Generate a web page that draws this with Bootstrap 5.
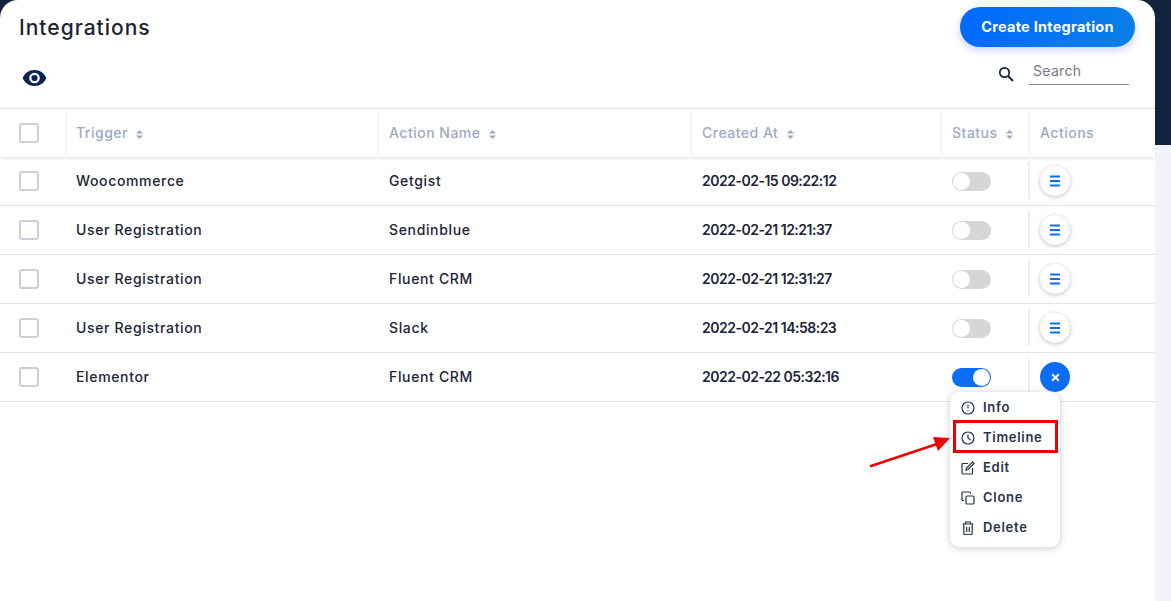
<!DOCTYPE html>
<html lang="en">
<head>
  <meta charset="UTF-8">
  <meta name="viewport" content="width=device-width, initial-scale=1.0">
  <title>Integrations</title>
  <link href="https://cdn.jsdelivr.net/npm/bootstrap@5.3.0/dist/css/bootstrap.min.css" rel="stylesheet">
  <style>
    html, body { height: 100%; }
    body {
      background: linear-gradient(#12233f 0, #12233f 145px, #f3f4fb 145px);
      font-family: "Inter", "Liberation Sans", sans-serif;
      overflow: hidden;
    }
    .panel {
      width: 1155px;
      height: 601px;
      background: #fff;
      border-radius: 18px 18px 0 0;
      position: relative;
    }
    .top-bar { height: 54px; padding: 7px 20px 0 19px; }
    .page-title { font-size: 21px; font-weight: 500; color: #1c2330; margin: 0; letter-spacing: 1px; }
    .create-btn {
      width: 175px; height: 40px; border: 0; border-radius: 20px; color: #fff;
      font-size: 14.5px; font-weight: 700; letter-spacing: .25px;
      background: linear-gradient(90deg, #0069ff, #0a7fe6);
      box-shadow: 0 3px 8px rgba(40, 70, 220, .25);
    }
    .tool-bar { height: 54px; padding: 0 26px 0 22px; }
    .eye-icon { margin-top: 16px; }
    .search-icon { margin-top: 12px; }
    .search-box { width: 100px; height: 31px; border-bottom: 1px solid #888; margin-left: 15px; padding: 7px 4px 0; font-size: 14px; color: #757a85; line-height: 20px; letter-spacing: .3px; }
    .int-table { width: 1155px; table-layout: fixed; border-collapse: separate; border-spacing: 0; margin: 0; }
    .int-table th {
      height: 49px; padding: 0 0 2px 10px; font-size: 14px; font-weight: 500; color: #9aaac4; letter-spacing: .5px;
      border-top: 1px solid #e1e2ec; border-left: 1px solid #f1f2f6;
      box-shadow: 0 3px 3px -1px rgba(30, 40, 70, .12);
    }
    .int-table th:nth-child(2) { padding-left: 9px; }
    .int-table td {
      height: 49px; padding: 0 0 0 11px; font-size: 14px; font-weight: 500; color: #1b2436; letter-spacing: .65px;
      border-bottom: 1px solid #e1e2ec; vertical-align: middle;
    }
    .int-table td:nth-child(2) { padding-left: 10px; }
    .int-table td:nth-child(2), .int-table td:nth-child(3), .int-table td:nth-child(4) { padding-bottom: 2px; }
    .int-table th.check-cell { padding: 0 0 0 19px; border-left: 0; }
    .int-table td.check-cell { padding-left: 19px; }
    .int-table .date-cell { letter-spacing: -.5px; font-weight: 600; }
    .fake-check { display: block; width: 20px; height: 20px; border: 2px solid #c9ced8; border-radius: 3px; }
    .sort-mark { display: inline-block; margin-left: 4px; vertical-align: -1px; }
    .sw { display: block; width: 39px; height: 19px; border-radius: 10px; background: #d6d6d6; position: relative; }
    .sw::after { content: ""; position: absolute; left: 1px; top: 1px; width: 17px; height: 17px; border-radius: 50%; background: #fff; }
    .sw.on { background: #0b6cf5; }
    .sw.on::after { left: 21px; }
    .act-cell { position: relative; }
    .act-cell::before { content: ""; position: absolute; left: -1px; top: 5px; bottom: 6px; width: 2px; background: #eceef2; }
    .round-btn {
      display: block; width: 30px; height: 30px; border-radius: 50%; border: 0; padding: 0; background: #fff;
      box-shadow: 0 1px 4px rgba(30, 40, 70, .3);
    }
    .round-btn.open { background: #0b6cf5; box-shadow: none; }
    .round-btn svg { display: block; margin: auto; }
    .act-menu {
      position: absolute; left: 950px; top: 392px; width: 110px; height: 155px; background: #fff;
      border-radius: 9px; padding: 1px 0 0; box-shadow: 0 1px 7px rgba(30, 40, 70, .25);
    }
    .act-item { height: 30px; padding-left: 11px; gap: 8px; font-size: 13px; font-weight: 600; color: #263248; letter-spacing: .7px; }
    .hl-box { position: absolute; left: 953px; top: 420px; width: 105px; height: 33px; border: 3px solid #ee0000; }
    .hl-arrow { position: absolute; left: 865px; top: 432px; }
  </style>
</head>
<body>

<svg width="0" height="0" class="d-block">
  <symbol id="sortIcon" viewBox="0 0 7 9"><path d="M3.5 0 7 3.6H0zM3.5 9 0 5.4h7z" fill="#9aaac4"/></symbol>
  <symbol id="barsIcon" viewBox="0 0 12 12"><path d="M1 1.500h10M1 6h10M1 10.500h10" stroke="#0b6cf5" stroke-width="2" fill="none"/></symbol>
</svg>

<div class="panel">
  <div class="top-bar d-flex justify-content-between">
    <h1 class="page-title pt-2">Integrations</h1>
    <button class="create-btn">Create Integration</button>
  </div>
  <div class="tool-bar d-flex justify-content-between align-items-start">
    <svg class="eye-icon" width="25" height="16" viewBox="0 0 25 16"><path d="M12.5 0C7 0 2.6 3.2.7 8c1.900 4.800 6.300 8 11.800 8s9.900-3.200 11.800-8C22.400 3.200 18 0 12.500 0zm0 13.300a5.300 5.300 0 1 1 0-10.600 5.300 5.300 0 0 1 0 10.600z" fill="#0a2258"/><circle cx="12.500" cy="8" r="3.100" fill="#0a2258"/></svg>
    <div class="d-flex align-items-start">
      <svg class="search-icon" width="16" height="16" viewBox="0 0 16 16"><circle cx="6.500" cy="6.500" r="4.700" stroke="#12233f" stroke-width="1.700" fill="none"/><path d="m10 10 5 5" stroke="#12233f" stroke-width="2"/></svg>
      <div class="search-box">Search</div>
    </div>
  </div>

  <table class="int-table">
    <colgroup>
      <col style="width:66px"><col style="width:312px"><col style="width:313px"><col style="width:250px"><col style="width:88px"><col style="width:126px">
    </colgroup>
    <thead>
      <tr>
        <th class="check-cell"><span class="fake-check"></span></th>
        <th>Trigger <svg class="sort-mark" width="7" height="9"><use href="#sortIcon"/></svg></th>
        <th>Action Name <svg class="sort-mark" width="7" height="9"><use href="#sortIcon"/></svg></th>
        <th>Created At <svg class="sort-mark" width="7" height="9"><use href="#sortIcon"/></svg></th>
        <th>Status <svg class="sort-mark" width="7" height="9"><use href="#sortIcon"/></svg></th>
        <th>Actions</th>
      </tr>
    </thead>
    <tbody id="rows"></tbody>
  </table>

  <div class="act-menu">
    <div class="act-item d-flex align-items-center">
      <svg width="14" height="14" viewBox="0 0 14 14" fill="none" stroke="#263248" stroke-width="1.200"><circle cx="7" cy="7" r="6"/><path d="M7 3.800v3.400M7 9.400v.8"/></svg>Info
    </div>
    <div class="act-item d-flex align-items-center">
      <svg width="14" height="14" viewBox="0 0 14 14" fill="none" stroke="#263248" stroke-width="1.200"><circle cx="7" cy="7" r="6"/><path d="M7 3.500V7l2.500 2"/></svg>Timeline
    </div>
    <div class="act-item d-flex align-items-center">
      <svg width="14" height="14" viewBox="0 0 14 14" fill="none" stroke="#263248" stroke-width="1.200"><path d="M7 2.500H2a1 1 0 0 0-1 1V12a1 1 0 0 0 1 1h8.500a1 1 0 0 0 1-1V7"/><path d="M5 9.200 5.500 7 11.500 1l1.500 1.500-6 6z"/></svg>Edit
    </div>
    <div class="act-item d-flex align-items-center">
      <svg width="14" height="14" viewBox="0 0 14 14" fill="none" stroke="#263248" stroke-width="1.200"><rect x="5" y="5" width="8" height="8" rx="1"/><path d="M3 9.500H2a1 1 0 0 1-1-1V2a1 1 0 0 1 1-1h6.500a1 1 0 0 1 1 1v1"/></svg>Clone
    </div>
    <div class="act-item d-flex align-items-center">
      <svg width="14" height="14" viewBox="0 0 14 14" fill="none" stroke="#263248" stroke-width="1.200"><path d="M1.500 3h11M4.500 3V1h5v2M2.800 3v9.500a1 1 0 0 0 1 1h6.400a1 1 0 0 0 1-1V3M5.700 6v5M8.300 6v5"/></svg>Delete
    </div>
  </div>

  <div class="hl-box"></div>
  <svg class="hl-arrow" width="90" height="40" viewBox="0 0 90 40"><path d="M6 34 72 12" stroke="#ee0000" stroke-width="2.500" stroke-linecap="round"/><path d="M85 6 68 5l5 14z" fill="#ee0000"/></svg>
</div>

<script>
  const rows = [
    ['Woocommerce', 'Getgist', '2022-02-15 09:22:12', false],
    ['User Registration', 'Sendinblue', '2022-02-21 12:21:37', false],
    ['User Registration', 'Fluent CRM', '2022-02-21 12:31:27', false],
    ['User Registration', 'Slack', '2022-02-21 14:58:23', false],
    ['Elementor', 'Fluent CRM', '2022-02-22 05:32:16', true]
  ];
  const body = document.getElementById('rows');
  rows.forEach(r => {
    const icon = r[3]
      ? '<svg width="11" height="11" viewBox="0 0 10 10"><path d="m2 2 6 6M8 2 2 8" stroke="#fff" stroke-width="1.800"/></svg>'
      : '<svg width="12" height="12"><use href="#barsIcon"/></svg>';
    const tr = document.createElement('tr');
    tr.innerHTML = `<td class="check-cell"><span class="fake-check"></span></td><td>${r[0]}</td><td>${r[1]}</td><td class="date-cell">${r[2]}</td>` +
      `<td><span class="sw ${r[3] ? 'on' : ''}"></span></td><td class="act-cell"><button class="round-btn ${r[3] ? 'open' : ''}">${icon}</button></td>`;
    body.appendChild(tr);
  });
</script>
</body>
</html>
